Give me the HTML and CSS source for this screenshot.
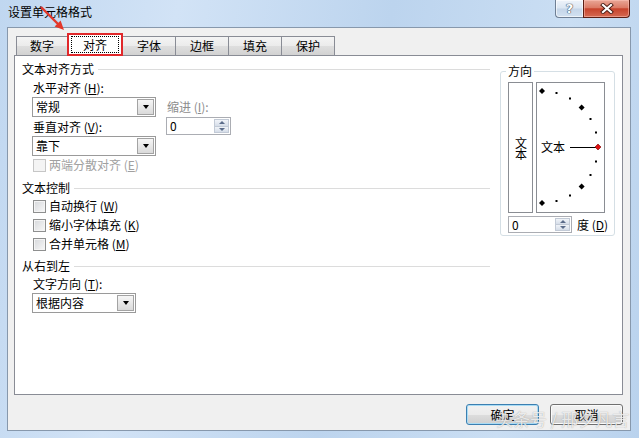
FILE: index.html
```html
<!DOCTYPE html>
<html lang="zh-CN">
<head>
  <meta charset="UTF-8">
  <title>设置单元格格式</title>
  <link rel="stylesheet" href="styles.css">
</head>
<body>
  <div class="window">

    <!-- Title bar -->
    <div class="titlebar">
      <span class="title">设置单元格格式</span>
      <div class="caption-btns">
        <span class="btn-help">?</span>
        <span class="btn-close">
          <svg width="14" height="11" viewBox="0 0 14 11">
            <path d="M3 2 L11 9 M11 2 L3 9" stroke="#4a1c14" stroke-width="4" stroke-linecap="square"/>
            <path d="M3 2 L11 9 M11 2 L3 9" stroke="#fff" stroke-width="2.2" stroke-linecap="square"/>
          </svg>
        </span>
      </div>
    </div>

    <!-- Dialog body -->
    <div class="client">
      <div class="tabs">
        <div class="tab first">数字</div>
        <div class="tab active"><span class="focus">对齐</span></div>
        <div class="tab">字体</div>
        <div class="tab">边框</div>
        <div class="tab">填充</div>
        <div class="tab">保护</div>
      </div>

      <div class="panel">
        <div class="left-col">
          <div class="group-head">文本对齐方式</div>
          <div class="align-grid">
            <div class="lbl">水平对齐 (<u>H</u>):</div>
            <div></div>
            <div class="select"><span class="val">常规</span><span class="drop"></span></div>
            <div class="lbl gray mid">缩进 (<u>I</u>):</div>
            <div class="lbl mid">垂直对齐 (<u>V</u>):</div>
            <div class="spin indent"><span class="val">0</span><span class="arrows"><i class="up"></i><i class="down"></i></span></div>
            <div class="select"><span class="val">靠下</span><span class="drop"></span></div>
          </div>
          <div class="check disabled first-check"><span class="cb"></span>两端分散对齐 (<u>E</u>)</div>

          <div class="group-head sec">文本控制</div>
          <div class="check-list">
            <div class="check"><span class="cb"></span>自动换行 (<u>W</u>)</div>
            <div class="check"><span class="cb"></span>缩小字体填充 (<u>K</u>)</div>
            <div class="check"><span class="cb"></span>合并单元格 (<u>M</u>)</div>
          </div>

          <div class="group-head sec2">从右到左</div>
          <div class="lbl dir-lbl">文字方向 (<u>T</u>):</div>
          <div class="select dir"><span class="val">根据内容</span><span class="drop"></span></div>
        </div>

        <!-- Orientation -->
        <fieldset class="orient">
          <legend>方向</legend>
          <div class="orient-boxes">
            <div class="vbox"><span class="vtext">文本</span></div>
            <div class="arc-box">
              <svg width="67" height="129" viewBox="0 0 67 129">
                <text x="4" y="68.5" font-size="12" font-family="Noto Sans CJK SC, sans-serif" fill="#000">文本</text>
                <line x1="33" y1="64.5" x2="59" y2="64.5" stroke="#000" stroke-width="1"/>
                <polygon points="5,5 8,8 5,11 2,8" fill="#000"/>
                <polygon points="44.6,21.4 47.6,24.4 44.6,27.4 41.6,24.4" fill="#000"/>
                <polygon points="44.6,100.6 47.6,103.6 44.6,106.6 41.6,103.6" fill="#000"/>
                <polygon points="5,117 8,120 5,123 2,120" fill="#000"/>
                <polygon points="61,61 64,64 61,67 58,64" fill="#e01010" stroke="#700" stroke-width="0.6"/>
                <rect x="18.5" y="9" width="2" height="2" fill="#000"/>
                <rect x="32" y="14.5" width="2" height="2" fill="#000"/>
                <rect x="52.5" y="35" width="2" height="2" fill="#000"/>
                <rect x="58" y="48.5" width="2" height="2" fill="#000"/>
                <rect x="58" y="77.5" width="2" height="2" fill="#000"/>
                <rect x="52.5" y="91" width="2" height="2" fill="#000"/>
                <rect x="32" y="111.5" width="2" height="2" fill="#000"/>
                <rect x="18.5" y="117" width="2" height="2" fill="#000"/>
              </svg>
            </div>
          </div>
          <div class="deg-row">
            <div class="spin deg"><span class="val">0</span><span class="arrows"><i class="up"></i><i class="down"></i></span></div>
            <span class="deg-lbl">度 (<u>D</u>)</span>
          </div>
        </fieldset>
      </div>

      <div class="footer">
        <button class="btn default">确定</button>
        <button class="btn">取消</button>
      </div>
    </div>

    <!-- Annotation arrow and watermark -->
    <svg class="arrow" width="80" height="40" viewBox="0 0 80 40">
      <line x1="41" y1="7" x2="58" y2="24" stroke="#e3372a" stroke-width="2.4"/>
      <polygon points="64,30 60.6,20.6 54.6,26.6" fill="#e3372a"/>
    </svg>
    <div class="watermark">头条号 / 邢夕凡言</div>
  </div>
</body>
</html>
```

FILE: styles.css
```css
/* General */
* {
  margin: 0;
  padding: 0;
  box-sizing: border-box;
}

html, body {
  width: 639px;
  height: 438px;
  overflow: hidden;
}

body {
  font-family: "Noto Sans CJK SC", "Liberation Sans", sans-serif;
  font-size: 12px;
  line-height: 14px;
  color: #000;
  background: #b9d1ea;
}

u {
  text-decoration: underline;
  text-underline-offset: 1px;
}

/* Window frame */
.window {
  position: relative;
  width: 639px;
  height: 438px;
  display: flex;
  flex-direction: column;
  background: linear-gradient(100deg, #c0d7f0 0%, #d2e3f6 25%, #bcd4ee 55%, #cadef3 80%, #b9d2ed 100%);
}

.titlebar {
  height: 27px;
  display: flex;
  align-items: flex-start;
}

.title {
  padding: 5px 0 0 8px;
  color: #000;
}

.caption-btns {
  margin-left: auto;
  margin-right: 9px;
  display: flex;
}

.btn-help {
  width: 28px;
  height: 18px;
  border: 1px solid #6f7f94;
  border-top: none;
  border-right: none;
  border-radius: 0 0 0 4px;
  background: linear-gradient(#eef3fa 0%, #dbe6f2 48%, #c5d5e8 52%, #d2e1f1 100%);
  box-shadow: inset 0 0 0 1px rgba(255, 255, 255, 0.6);
  text-align: center;
  font: bold 13px/17px "DejaVu Sans", sans-serif;
  color: #fff;
  text-shadow: 0 0 1px #3d4c60, 0 0 1px #3d4c60, 0 0 1px #3d4c60;
}

.btn-close {
  width: 47px;
  height: 18px;
  border: 1px solid #5b1e14;
  border-top: none;
  border-radius: 0 0 4px 0;
  background: linear-gradient(#e9a797 0%, #dc7b66 45%, #c7432c 52%, #d56a52 100%);
  box-shadow: inset 0 0 0 1px rgba(255, 200, 190, 0.5);
  display: flex;
  align-items: center;
  justify-content: center;
}

/* Dialog client area */
.client {
  flex: 1;
  margin: 0 8px 7px 7px;
  border: 1px solid #8798ac;
  background: #f0f0f0;
  padding: 5px 7px 0 6px;
}

/* Tabs */
.tabs {
  display: flex;
  align-items: flex-end;
  height: 23px;
  margin-bottom: -1px;
  padding-left: 2px;
  position: relative;
  z-index: 1;
}

.tab {
  width: 54px;
  height: 19px;
  margin-left: -1px;
  margin-bottom: 1px;
  border: 1px solid #898c95;
  border-bottom: none;
  background: linear-gradient(#f4f4f4 0%, #ebebeb 50%, #dedede 52%, #d2d2d2 100%);
  text-align: center;
  line-height: 18px;
}

.tab.first {
  width: 52px;
  margin-left: 0;
}

.tab.active {
  width: 56px;
  height: 23px;
  margin-bottom: 0;
  background: #fff;
  border: 2px solid #e0272a;
  position: relative;
  z-index: 2;
}

.tab.active .focus {
  display: block;
  height: 17px;
  margin: 1px 2px;
  border: 1px dotted #000;
  line-height: 15px;
}

/* Tab panel */
.panel {
  height: 340px;
  border: 1px solid #898c95;
  background: #fff;
  display: flex;
  align-items: flex-start;
  padding: 6px 0 0 7px;
}

.left-col {
  width: 468px;
}

.group-head {
  display: flex;
  align-items: center;
  height: 14px;
}

.group-head::after {
  content: "";
  flex: 1;
  height: 1px;
  margin-left: 4px;
  background: #dcdcdc;
}

.group-head.sec {
  margin-top: 9px;
}

.group-head.sec2 {
  margin-top: 8px;
}

.lbl {
  padding-left: 1px;
  white-space: nowrap;
}

.lbl.gray {
  color: #8d8d8d;
}

.lbl.mid {
  align-self: center;
}

.align-grid {
  margin: 5px 0 0 10px;
  display: grid;
  grid-template-columns: 124px auto;
  grid-template-rows: 16px 20px 19px 20px;
  column-gap: 10px;
  justify-items: start;
}

/* Combo box */
.select {
  display: flex;
  width: 124px;
  height: 20px;
  border: 1px solid #9a9a9a;
  background: #fff;
}

.select .val {
  flex: 1;
  padding-left: 3px;
  line-height: 18px;
}

.select .drop {
  width: 17px;
  margin: 1px;
  border: 1px solid #a3a3a3;
  background: linear-gradient(#f6f6f6, #dadada);
  display: flex;
  align-items: center;
  justify-content: center;
}

.select .drop::before {
  content: "";
  border-left: 3.5px solid transparent;
  border-right: 3.5px solid transparent;
  border-top: 4px solid #000;
}

.select.dir {
  width: 104px;
  margin: 2px 0 0 10px;
}

/* Spinner */
.spin {
  display: flex;
  height: 18px;
  border: 1px solid #abadb3;
  background: #fff;
}

.spin .val {
  flex: 1;
  padding-left: 3px;
  line-height: 16px;
}

.spin .arrows {
  width: 15px;
  display: flex;
  flex-direction: column;
  margin: 1px;
}

.spin .arrows i {
  flex: 1;
  display: flex;
  align-items: center;
  justify-content: center;
  background: linear-gradient(#f1f4f9, #d5dde8);
  border: 1px solid #c2cad6;
}

.spin .arrows i + i {
  border-top: none;
}

.spin .up::before {
  content: "";
  border-left: 3px solid transparent;
  border-right: 3px solid transparent;
  border-bottom: 3px solid #5b6c8a;
}

.spin .down::before {
  content: "";
  border-left: 3px solid transparent;
  border-right: 3px solid transparent;
  border-top: 3px solid #5b6c8a;
}

.spin.indent {
  width: 65px;
  align-self: start;
}

.spin.deg {
  width: 64px;
  height: 17px;
}

.spin.deg .val {
  line-height: 15px;
}

/* Checkboxes */
.check {
  display: flex;
  align-items: center;
  height: 14px;
  padding-left: 11px;
  white-space: nowrap;
}

.cb {
  width: 13px;
  height: 13px;
  margin-right: 3px;
  border: 1px solid #8e8f8f;
  background: linear-gradient(135deg, #d6d8db, #f8f8f8);
  box-shadow: inset 0 0 0 1px #f4f4f4;
}

.check.disabled {
  color: #a0a0a0;
}

.check.disabled .cb {
  border-color: #c6c6c6;
  background: #f4f4f4;
}

.first-check {
  margin-top: 2px;
}

.check-list {
  margin-top: 4px;
  display: flex;
  flex-direction: column;
  gap: 5px;
}

.dir-lbl {
  margin-top: 4px;
  padding-left: 11px;
}

/* Orientation group */
.orient {
  margin: 2px 0 0 10px;
  width: 114px;
  height: 172px;
  border: 1px solid #d5dfe5;
  border-radius: 3px;
  padding: 4px 6px 0 7px;
}

.orient legend {
  margin-left: -2px;
  padding: 0 2px;
  line-height: 14px;
}

.orient-boxes {
  display: flex;
  gap: 3px;
  height: 131px;
}

.vbox {
  width: 25px;
  border: 1px solid #8a8d93;
  display: flex;
  align-items: center;
  justify-content: center;
}

.vtext {
  writing-mode: vertical-rl;
  text-orientation: upright;
  line-height: 12px;
  letter-spacing: -1px;
}

.arc-box {
  width: 69px;
  border: 1px solid #8a8d93;
}

.arc-box svg {
  display: block;
}

.deg-row {
  margin-top: 3px;
  display: flex;
  align-items: center;
}

.deg-lbl {
  margin-left: 5px;
  white-space: nowrap;
}

/* Buttons */
.footer {
  margin-top: 9px;
  display: flex;
  justify-content: flex-end;
  gap: 11px;
}

.btn {
  width: 73px;
  height: 21px;
  border: 1px solid #707070;
  border-radius: 3px;
  background: linear-gradient(#f2f2f2 0%, #ebebeb 50%, #dddddd 52%, #cfcfcf 100%);
  box-shadow: inset 0 0 0 1px #fbfbfb;
  font: inherit;
  line-height: 19px;
  color: #000;
}

.btn.default {
  border-color: #3c7fb1;
  box-shadow: inset 0 0 0 1px #a9dcf5;
}

/* Overlays */
.arrow {
  position: absolute;
  left: 0;
  top: 0;
}

.watermark {
  position: absolute;
  left: 496px;
  top: 409px;
  font-size: 17px;
  line-height: 20px;
  color: rgba(255, 255, 255, 0.8);
  text-shadow: 0 0 1px rgba(80, 80, 80, 0.55);
  white-space: nowrap;
}
```
